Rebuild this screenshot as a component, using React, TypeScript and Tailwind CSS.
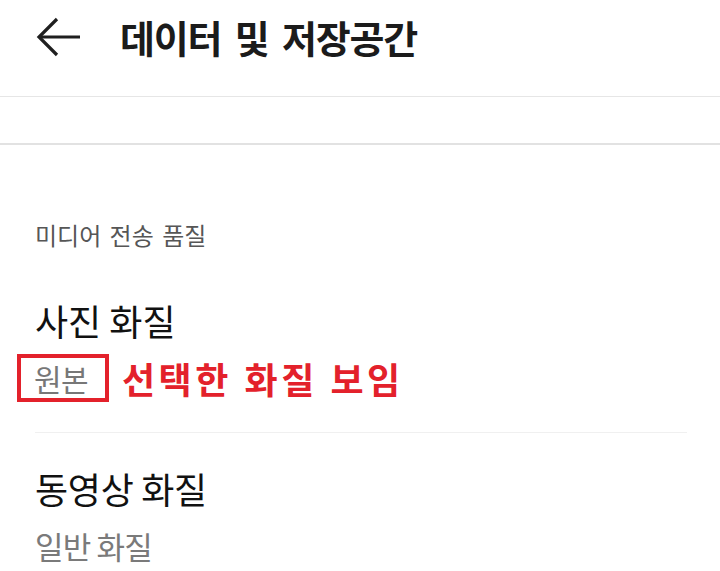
const font = "font-['Noto_Sans_CJK_KR','Noto_Sans',sans-serif]";

function BackArrow() {
  return (
    <svg width="46" height="40" viewBox="0 0 46 40" fill="none" stroke="#1f1f1f" strokeWidth={3.2} strokeLinecap="butt" strokeLinejoin="miter">
      <path d="M44 20H4" />
      <path d="M21 2L3 20l18 18" />
    </svg>
  );
}

export default function App() {
  return (
    <div className={`w-[720px] h-[571px] bg-white overflow-hidden ${font}`}>
      {/* top bar */}
      <div className="h-[74px] flex items-center pl-[36px]">
        <BackArrow />
        <h1 className="ml-[38px] text-[38px] leading-none font-bold text-[#1b1b1b] tracking-[-1.2px] [word-spacing:6px]">
          데이터 및 저장공간
        </h1>
      </div>
      <div className="mt-[22px] h-px bg-[#e6e6e6]" />
      <div className="h-[46px]" />
      <div className="h-[2px] bg-[#e2e2e2]" />

      <div className="px-[35px]">
        <p className="mt-[78px] text-[24px] leading-none text-[#565656] tracking-[0px] [word-spacing:3px]">
          미디어 전송 품질
        </p>

        {/* 사진 화질 */}
        <div className="mt-[55px]">
          <p className="text-[36px] leading-none text-[#111] tracking-[0px]">사진 화질</p>
          <div className="mt-[16px] -ml-[18px] flex items-center">
            <span className="w-[92px] h-[48px] border-[4px] border-[#e3212b] flex items-center pl-[13px] text-[30px] leading-none text-[#777] tracking-[-0.5px]">
              원본
            </span>
            <span className="ml-[13px] text-[36px] leading-none font-bold text-[#e3212b] tracking-[3.5px] [word-spacing:1px]">
              선택한 화질 보임
            </span>
          </div>
        </div>

        <div className="mt-[30px] h-px bg-[#f0f0f0] mr-[-2px]" />

        {/* 동영상 화질 */}
        <div className="mt-[37px]">
          <p className="text-[36px] leading-none text-[#111] tracking-[-0.3px]">동영상 화질</p>
          <p className="mt-[24px] text-[31px] leading-none text-[#7a7a7a] tracking-[-0.8px]">일반 화질</p>
        </div>
      </div>
    </div>
  );
}
